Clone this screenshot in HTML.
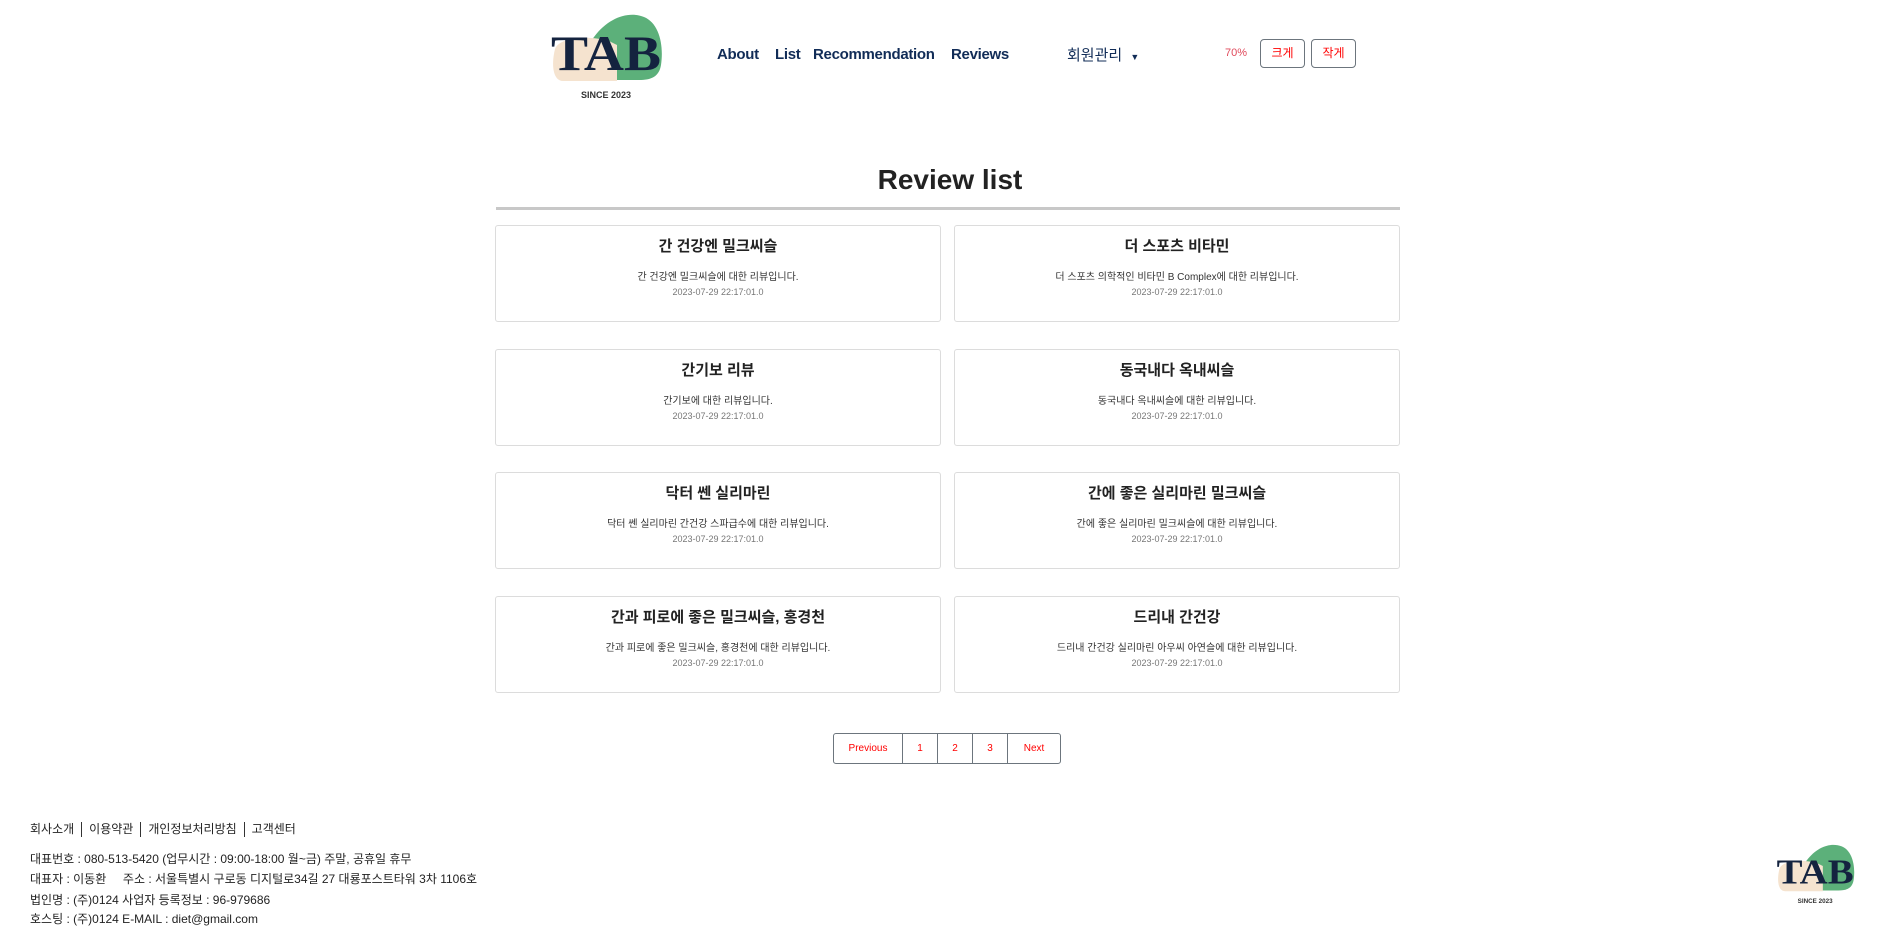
<!DOCTYPE html>
<html><head><meta charset="utf-8"><style>
*{margin:0;padding:0;box-sizing:border-box}
body{width:1897px;height:952px;background:#fff;position:relative;overflow:hidden;font-family:"Liberation Sans","Noto Sans CJK KR",sans-serif;color:#212529}
.a{position:absolute;white-space:nowrap}
.nav{color:#112c57;font-size:15px;font-weight:bold;top:46px;letter-spacing:-0.3px}
.card{position:absolute;width:446px;height:97px;border:1px solid #dcdcdc;border-radius:3px;text-align:center}
.card h3{font-size:15px;font-weight:bold;margin-top:9px;color:#222}
.card p{font-size:10px;margin-top:12px;color:#333}
.card span{display:block;font-size:9px;color:#777;margin-top:4px}
.pg{position:absolute;top:733px;height:31px;border:1px solid #6c757d;color:#f00;font-size:10px;text-align:center;line-height:29px}
.btn{position:absolute;top:39px;height:29px;width:45px;border:1px solid #6c757d;border-radius:4px;color:#f00;font-size:12px;text-align:center;line-height:27px}
.ft{font-size:12px;color:#222;left:30px}
.sep{display:inline-block;width:1px;height:15px;background:#333;vertical-align:middle;margin:0 7px}
</style></head><body>
<svg class="a" style="left:549px;top:5px" width="115" height="100" viewBox="0 0 115 100">
<path d="M48 70 C30 70 28 52 45 32 C60 12 80 6 95 12 C110 18 115 40 112 60 C110 72 102 75 90 75 L48 75 Z" fill="#5cb07a"/>
<path d="M6 44 C10 32 40 30 60 36 L68 40 L68 76 L14 76 C4 76 2 60 6 44 Z" fill="#f5e3cf"/>
<text x="2" y="65" font-family="Liberation Serif,serif" font-weight="bold" font-size="50" fill="#14233f" textLength="110" lengthAdjust="spacingAndGlyphs">TAB</text>
<text x="57" y="93" text-anchor="middle" font-family="Liberation Sans,sans-serif" font-weight="bold" font-size="9" fill="#333">SINCE 2023</text>
</svg>
<div class="a nav" style="left:717px">About</div>
<div class="a nav" style="left:775px">List</div>
<div class="a nav" style="left:813px">Recommendation</div>
<div class="a nav" style="left:951px">Reviews</div>
<div class="a" style="left:1067px;top:44px;font-size:15px;color:#112c57">회원관리 <span style="font-size:9px;margin-left:4px">▼</span></div>
<div class="a" style="left:1225px;top:47px;font-size:11px;color:#e0485a">70%</div>
<div class="btn" style="left:1260px">크게</div>
<div class="btn" style="left:1311px">작게</div>
<div class="a" style="left:0;width:1900px;top:164px;text-align:center;font-size:28px;font-weight:bold;color:#222">Review list</div>
<div class="a" style="left:496px;top:207px;width:904px;height:3px;background:#c8c8c8"></div>

<div class="card" style="left:495px;top:225px"><h3>간 건강엔 밀크씨슬</h3><p>간 건강엔 밀크씨슬에 대한 리뷰입니다.</p><span>2023-07-29 22:17:01.0</span></div>
<div class="card" style="left:954px;top:225px"><h3>더 스포츠 비타민</h3><p>더 스포츠 의학적인 비타민 B Complex에 대한 리뷰입니다.</p><span>2023-07-29 22:17:01.0</span></div>
<div class="card" style="left:495px;top:349px"><h3>간기보 리뷰</h3><p>간기보에 대한 리뷰입니다.</p><span>2023-07-29 22:17:01.0</span></div>
<div class="card" style="left:954px;top:349px"><h3>동국내다 옥내씨슬</h3><p>동국내다 옥내씨슬에 대한 리뷰입니다.</p><span>2023-07-29 22:17:01.0</span></div>
<div class="card" style="left:495px;top:472px"><h3>닥터 쎈 실리마린</h3><p>닥터 쎈 실리마린 간건강 스파급수에 대한 리뷰입니다.</p><span>2023-07-29 22:17:01.0</span></div>
<div class="card" style="left:954px;top:472px"><h3>간에 좋은 실리마린 밀크씨슬</h3><p>간에 좋은 실리마린 밀크씨슬에 대한 리뷰입니다.</p><span>2023-07-29 22:17:01.0</span></div>
<div class="card" style="left:495px;top:596px"><h3>간과 피로에 좋은 밀크씨슬, 홍경천</h3><p>간과 피로에 좋은 밀크씨슬, 홍경천에 대한 리뷰입니다.</p><span>2023-07-29 22:17:01.0</span></div>
<div class="card" style="left:954px;top:596px"><h3>드리내 간건강</h3><p>드리내 간건강 실리마린 아우씨 아연슬에 대한 리뷰입니다.</p><span>2023-07-29 22:17:01.0</span></div>

<div class="pg" style="left:833px;width:70px;border-radius:3px 0 0 3px">Previous</div>
<div class="pg" style="left:902px;width:36px">1</div>
<div class="pg" style="left:937px;width:36px">2</div>
<div class="pg" style="left:972px;width:36px">3</div>
<div class="pg" style="left:1007px;width:54px;border-radius:0 3px 3px 0">Next</div>

<div class="a ft" style="top:820px;font-size:12px">회사소개<span class="sep"></span>이용약관<span class="sep"></span>개인정보처리방침<span class="sep"></span>고객센터</div>
<div class="a ft" style="top:850px">대표번호 : 080-513-5420 (업무시간 : 09:00-18:00 월~금) 주말, 공휴일 휴무</div>
<div class="a ft" style="top:870px">대표자 : 이동환 &nbsp;&nbsp;&nbsp; 주소 : 서울특별시 구로동 디지털로34길 27 대룡포스트타워 3차 1106호</div>
<div class="a ft" style="top:891px">법인명 : (주)0124 사업자 등록정보 : 96-979686</div>
<div class="a ft" style="top:910px">호스팅 : (주)0124 E-MAIL : diet@gmail.com</div>

<svg class="a" style="left:1773px;top:838px" width="85" height="70" viewBox="0 0 115 100">
<path d="M48 70 C30 70 28 52 45 32 C60 12 80 6 95 12 C110 18 115 40 112 60 C110 72 102 75 90 75 L48 75 Z" fill="#5cb07a"/>
<path d="M6 44 C10 32 40 30 60 36 L68 40 L68 76 L14 76 C4 76 2 60 6 44 Z" fill="#f5e3cf"/>
<text x="2" y="65" font-family="Liberation Serif,serif" font-weight="bold" font-size="50" fill="#14233f" textLength="110" lengthAdjust="spacingAndGlyphs">TAB</text>
<text x="57" y="93" text-anchor="middle" font-family="Liberation Sans,sans-serif" font-weight="bold" font-size="9" fill="#333">SINCE 2023</text>
</svg>
</body></html>
